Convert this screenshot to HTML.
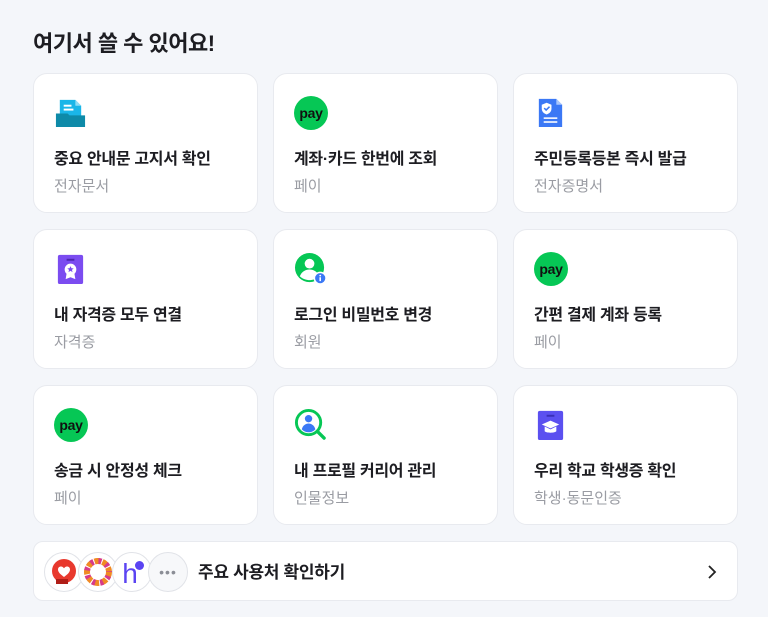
<!DOCTYPE html>
<html><head><meta charset="utf-8"><style>
*{margin:0;padding:0;box-sizing:border-box}
body{width:768px;height:617px;background:#f4f6fa;font-family:"Liberation Sans","Noto Sans CJK KR",sans-serif;position:relative;overflow:hidden;color:#1d1d22}
h1{position:absolute;left:33px;top:26px;font-size:22px;font-weight:700;letter-spacing:-0.5px}
.card{position:absolute;width:225px;height:140px;background:#fff;border-radius:14px;border:1px solid #e8eaef}
.ic{position:absolute;left:20px;top:22px;width:33px;height:33px}
.t{position:absolute;left:20px;top:71px;font-size:16px;font-weight:700;letter-spacing:-0.3px}
.s{position:absolute;left:20px;top:101px;font-size:15px;color:#9a9ca3}
.pay{width:34px;height:34px;border-radius:50%;background:#06c755;color:#111;font-weight:700;font-size:14px;display:flex;align-items:center;justify-content:center;letter-spacing:-0.3px}
.bar{position:absolute;left:33px;top:541px;width:705px;height:60px;background:#fff;border-radius:10px;border:1px solid #e8eaef}
.c{position:absolute;top:10px;width:40px;height:40px;border-radius:50%;background:#fff;border:1px solid #e1e3e8;display:flex;align-items:center;justify-content:center}
</style></head><body>
<h1>여기서 쓸 수 있어요!</h1>

<div class="card" style="left:33px;top:73px">
<svg class="ic" viewBox="0 0 34 34"><path d="M6 4h16l6 6v20H6z" fill="#1ab6e8"/><path d="M22 4v6h6z" fill="#8fdcf5"/><rect x="10" y="9" width="8" height="2" fill="#fff"/><rect x="10" y="13" width="10" height="2" fill="#fff"/><path d="M2 18h12l2 2h16v12H2z" fill="#0e8aa8"/></svg>
<div class="t">중요 안내문 고지서 확인</div><div class="s">전자문서</div></div>

<div class="card" style="left:273px;top:73px">
<div class="ic pay">pay</div>
<div class="t">계좌·카드 한번에 조회</div><div class="s">페이</div></div>

<div class="card" style="left:513px;top:73px">
<svg class="ic" viewBox="0 0 34 34"><path d="M5 3h18l6 6v23H5z" fill="#3b78f5"/><path d="M23 3v6h6z" fill="#a9c6fb"/><path d="M13 7l5 2v4c0 3-2 5-5 6-3-1-5-3-5-6V9z" fill="#fff"/><path d="M10.5 12.5l2 2 3.5-3.5" stroke="#3b78f5" stroke-width="1.6" fill="none"/><rect x="10" y="22" width="14" height="1.6" fill="#fff"/><rect x="10" y="26" width="14" height="1.6" fill="#fff"/></svg>
<div class="t">주민등록등본 즉시 발급</div><div class="s">전자증명서</div></div>

<div class="card" style="left:33px;top:229px">
<svg class="ic" viewBox="0 0 34 34"><rect x="4" y="3" width="26" height="30" rx="2" fill="#7b4cf0"/><rect x="13" y="7" width="8" height="2" fill="#4c27b0"/><path d="M13 22l-1 6 5-2 5 2-1-6z" fill="#fff"/><circle cx="17" cy="18" r="6" fill="#fff"/><path d="M17 14.5l1 2.2 2.3.2-1.8 1.5.6 2.3-2.1-1.3-2.1 1.3.6-2.3-1.8-1.5 2.3-.2z" fill="#7b4cf0"/></svg>
<div class="t">내 자격증 모두 연결</div><div class="s">자격증</div></div>

<div class="card" style="left:273px;top:229px">
<svg class="ic" viewBox="0 0 34 34"><circle cx="16" cy="16" r="15" fill="#06c755"/><circle cx="16" cy="12" r="5" fill="#fff"/><path d="M6 25c2-5 6-7 10-7s8 2 10 7c-3 3-7 4-10 4s-7-1-10-4z" fill="#fff"/><circle cx="27" cy="27" r="6" fill="#3b78f5" stroke="#fff" stroke-width="1.5"/><rect x="26.2" y="26" width="1.6" height="4" fill="#fff"/><circle cx="27" cy="24.3" r=".9" fill="#fff"/></svg>
<div class="t">로그인 비밀번호 변경</div><div class="s">회원</div></div>

<div class="card" style="left:513px;top:229px">
<div class="ic pay">pay</div>
<div class="t">간편 결제 계좌 등록</div><div class="s">페이</div></div>

<div class="card" style="left:33px;top:385px">
<div class="ic pay">pay</div>
<div class="t">송금 시 안정성 체크</div><div class="s">페이</div></div>

<div class="card" style="left:273px;top:385px">
<svg class="ic" viewBox="0 0 34 34"><circle cx="15" cy="15" r="12.5" fill="#fff" stroke="#06c755" stroke-width="3"/><path d="M24 24l7 7" stroke="#06c755" stroke-width="3.5" stroke-linecap="round"/><circle cx="15" cy="11" r="3.8" fill="#3b78f5"/><path d="M8 22c1-4 4-6 7-6s6 2 7 6c-2 2-4 3-7 3s-5-1-7-3z" fill="#3b78f5"/></svg>
<div class="t">내 프로필 커리어 관리</div><div class="s">인물정보</div></div>

<div class="card" style="left:513px;top:385px">
<svg class="ic" viewBox="0 0 34 34"><rect x="4" y="3" width="26" height="30" rx="2" fill="#5b50f0"/><rect x="13" y="7" width="8" height="2" fill="#3a2fb8"/><path d="M8 17l9-4 9 4-9 4z" fill="#fff"/><path d="M11 19v5c2 2 10 2 12 0v-5l-6 3z" fill="#fff"/></svg>
<div class="t">우리 학교 학생증 확인</div><div class="s">학생·동문인증</div></div>

<div class="bar">
<div class="c" style="left:10px"><svg width="28" height="28" viewBox="0 0 28 28"><circle cx="14" cy="13" r="12" fill="#e8392e"/><path d="M14 19c-4-3-6-5-6-7.5 0-2 1.5-3 3-3 1.3 0 2.3.8 3 1.8.7-1 1.7-1.8 3-1.8 1.5 0 3 1 3 3 0 2.5-2 4.5-6 7.5z" fill="#fff"/><rect x="6" y="21" width="12" height="5" fill="#b01e18"/></svg></div>
<div class="c" style="left:44px"><svg width="30" height="30" viewBox="0 0 30 30"><circle cx="15" cy="15" r="11" fill="none" stroke="#f08a24" stroke-width="6" stroke-dasharray="5 3"/><circle cx="15" cy="15" r="11" fill="none" stroke="#d63a8a" stroke-width="6" stroke-dasharray="3 5" stroke-dashoffset="4"/><circle cx="15" cy="15" r="7" fill="#fff"/></svg></div>
<div class="c" style="left:78px"><span style="color:#5b44f2;font-size:28px;line-height:1;margin-top:4px;margin-left:-4px">h</span><span style="position:absolute;left:22px;top:8px;width:9px;height:9px;border-radius:50%;background:#5b44f2"></span></div>
<div class="c" style="left:114px;background:#f7f8fa;color:#8b8e96;font-size:14px;letter-spacing:1px">•••</div>
<div style="position:absolute;left:164px;top:16px;font-size:17px;font-weight:700;letter-spacing:-0.3px">주요 사용처 확인하기</div>
<svg style="position:absolute;right:20px;top:22px" width="10" height="16" viewBox="0 0 10 16"><path d="M2 2l6 6-6 6" stroke="#222" stroke-width="1.8" fill="none"/></svg>
</div>
</body></html>
